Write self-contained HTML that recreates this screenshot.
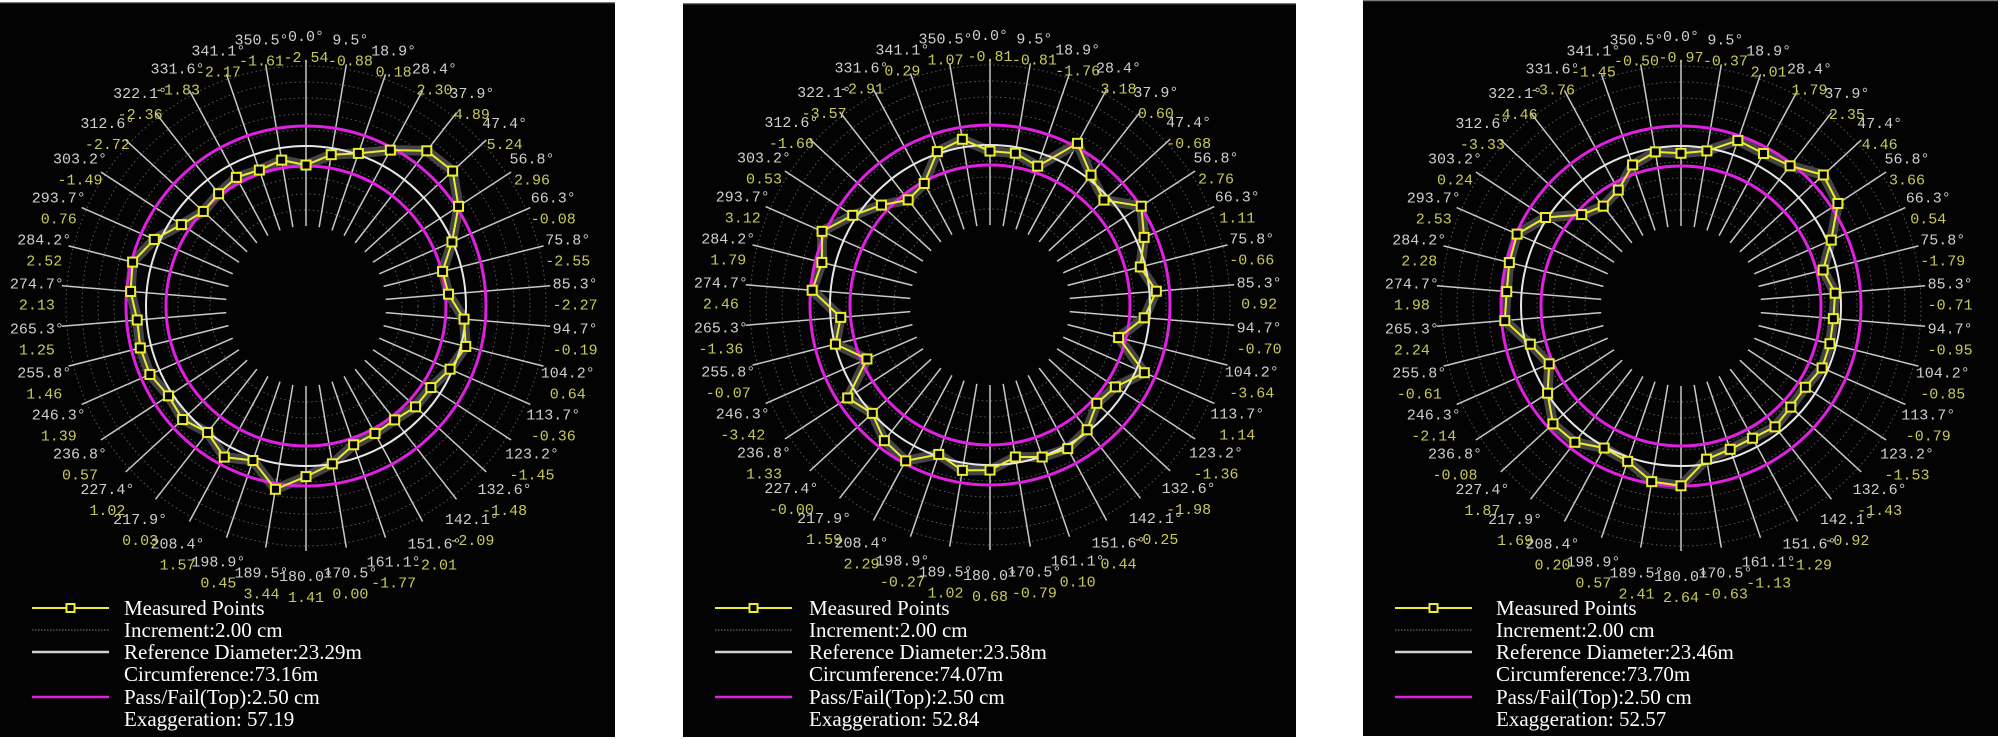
<!DOCTYPE html>
<html><head><meta charset="utf-8">
<style>
html,body{margin:0;padding:0;background:#fff;}
body{width:2000px;height:739px;overflow:hidden;}
svg{display:block;}
</style></head>
<body>
<svg id="s" width="2000" height="739" xmlns="http://www.w3.org/2000/svg"></svg>
<script>
const angles=["0.0","9.5","18.9","28.4","37.9","47.4","56.8","66.3","75.8","85.3","94.7","104.2","113.7","123.2","132.6","142.1","151.6","161.1","170.5","180.0","189.5","198.9","208.4","217.9","227.4","236.8","246.3","255.8","265.3","274.7","284.2","293.7","303.2","312.6","322.1","331.6","341.1","350.5"];
const panels=[
{x:0,y:2,w:615,h:735,cx:306,cy:304,lx:32,tx:124,
vals:["-2.54","-0.88","0.18","2.30","4.89","5.24","2.96","-0.08","-2.55","-2.27","-0.19","0.64","-0.36","-1.45","-1.48","-2.09","-2.01","-1.77","0.00","1.41","3.44","0.45","1.57","0.03","1.02","0.57","1.39","1.46","1.25","2.13","2.52","0.76","-1.49","-2.72","-2.36","-1.83","-2.17","-1.61"],
leg:["Measured Points","Increment:2.00 cm","Reference Diameter:23.29m","Circumference:73.16m","Pass/Fail(Top):2.50 cm","Exaggeration: 57.19"]},
{x:683,y:3,w:613,h:734,cx:307,cy:303,lx:32,tx:126,
vals:["-0.81","-0.81","-1.76","3.18","0.60","-0.68","2.76","1.11","-0.66","0.92","-0.70","-3.64","1.14","-1.36","-1.98","-0.25","0.44","0.10","-0.79","0.68","1.02","-0.27","2.29","1.59","-0.00","1.33","-3.42","-0.07","-1.36","2.46","1.79","3.12","0.53","-1.66","-3.57","-2.91","0.29","1.07"],
leg:["Measured Points","Increment:2.00 cm","Reference Diameter:23.58m","Circumference:74.07m","Pass/Fail(Top):2.50 cm","Exaggeration: 52.84"]},
{x:1363,y:0,w:635,h:736,cx:318,cy:304,lx:32,tx:133,
vals:["-0.97","-0.37","2.01","1.79","2.35","4.46","3.66","0.54","-1.79","-0.71","-0.95","-0.85","-0.79","-1.53","-1.43","-0.92","-1.29","-1.13","-0.63","2.64","2.41","0.57","0.20","1.69","1.87","-0.08","-2.14","-0.61","2.24","1.98","2.28","2.53","0.24","-3.33","-4.46","-3.76","-1.45","-0.50"],
leg:["Measured Points","Increment:2.00 cm","Reference Diameter:23.46m","Circumference:73.70m","Pass/Fail(Top):2.50 cm","Exaggeration: 52.57"]}
];
let out="";
for(const p of panels){
 let g=`<svg x="${p.x}" y="${p.y}" width="${p.w}" height="${p.h}"><rect width="${p.w}" height="${p.h}" fill="#030303"/><line x1="0" y1="0.5" x2="${p.w}" y2="0.5" stroke="#777" stroke-width="1.5"/>`;
 const cx=p.cx,cy=p.cy-p.y+2;
 for(let r=96;r<=248;r+=16) g+=`<circle cx="${cx}" cy="${cy}" r="${r}" fill="none" stroke="#5a5a5a" stroke-width="1" stroke-dasharray="1.5 3"/>`;
 let pts=[];
 for(let i=0;i<38;i++){
  const t=i*2*Math.PI/38,s=Math.sin(t),c=Math.cos(t);
  g+=`<line x1="${cx+80*s}" y1="${cy-80*c}" x2="${cx+245*s}" y2="${cy-245*c}" stroke="#c8c8c8" stroke-width="1.5"/>`;
  const lx=cx+270*s,ly=cy-270*c+5;
  g+=`<text x="${lx}" y="${ly}" fill="#cfcfcf" font-family="Liberation Mono, monospace" font-size="15" text-anchor="middle">${angles[i]}°</text>`;
  g+=`<text x="${lx}" y="${ly+21}" fill="#c9c95a" font-family="Liberation Mono, monospace" font-size="15" text-anchor="middle">${p.vals[i]}</text>`;
  const r=160+parseFloat(p.vals[i])*7.5;
  pts.push([cx+r*s,cy-r*c]);
 }
 const ps=pts.map(a=>a[0].toFixed(1)+","+a[1].toFixed(1)).join(" ");
 g+=`<polygon points="${ps}" fill="none" stroke="#444" stroke-width="10" stroke-linejoin="round"/>`;
 g+=`<circle cx="${cx}" cy="${cy}" r="160" fill="none" stroke="#e8e8e8" stroke-width="2"/>`;
 g+=`<circle cx="${cx}" cy="${cy}" r="140" fill="none" stroke="#e020e0" stroke-width="3"/>`;
 g+=`<circle cx="${cx}" cy="${cy}" r="180" fill="none" stroke="#e020e0" stroke-width="3"/>`;
 g+=`<polygon points="${ps}" fill="none" stroke="#ecec30" stroke-width="2"/>`;
 for(const a of pts) g+=`<rect x="${a[0]-4.5}" y="${a[1]-4.5}" width="9" height="9" fill="#000" stroke="#ecec30" stroke-width="2"/>`;
 const ys=[608,630,652,674,697,719].map(v=>v-p.y);
 const L=p.lx,R=p.lx+77;
 g+=`<line x1="${L}" y1="${ys[0]}" x2="${R}" y2="${ys[0]}" stroke="#ecec30" stroke-width="2"/><rect x="${(L+R)/2-4}" y="${ys[0]-4}" width="8" height="8" fill="#000" stroke="#ecec30" stroke-width="2"/>`;
 g+=`<line x1="${L}" y1="${ys[1]}" x2="${R}" y2="${ys[1]}" stroke="#555" stroke-width="1.5" stroke-dasharray="1.5 1.5"/>`;
 g+=`<line x1="${L}" y1="${ys[2]}" x2="${R}" y2="${ys[2]}" stroke="#d0d0d0" stroke-width="2.5"/>`;
 g+=`<line x1="${L}" y1="${ys[4]}" x2="${R}" y2="${ys[4]}" stroke="#e020e0" stroke-width="2.5"/>`;
 for(let k=0;k<6;k++) g+=`<text x="${p.tx}" y="${ys[k]+7}" fill="#fff" font-family="Liberation Serif, serif" font-size="21">${p.leg[k]}</text>`;
 g+=`</svg>`;
 out+=g;
}
document.getElementById("s").innerHTML=out;
</script>
</body></html>
